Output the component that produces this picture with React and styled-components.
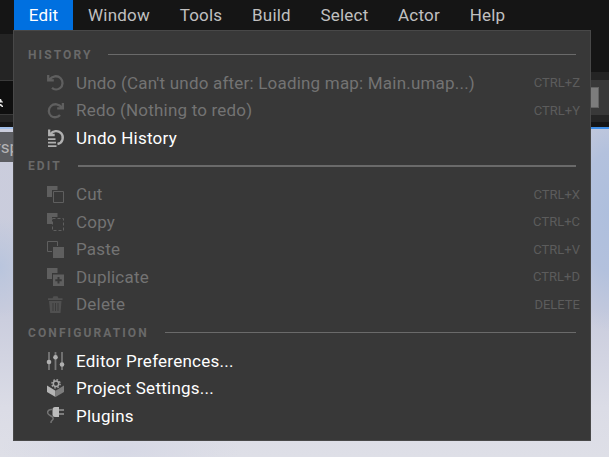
import React from 'react';
import styled, { createGlobalStyle } from 'styled-components';

const GlobalStyle = createGlobalStyle`
  body { margin: 0; overflow: hidden; background: #151515; }
  * { box-sizing: border-box; }
`;

const Editor = styled.div`
  position: relative;
  width: 609px;
  height: 457px;
  overflow: hidden;
  display: flex;
  flex-direction: column;
  background: #151515;
  font-family: Roboto, sans-serif;
  font-size: 17px;
  white-space: nowrap;
`;

const MenuBar = styled.nav`
  display: flex;
  flex: none;
  height: 30px;
  padding-left: 14px;
`;

const MenuBarItem = styled.div`
  flex: none;
  width: ${(p) => p.$width}px;
  text-align: center;
  line-height: 30px;
  letter-spacing: 0.2px;
  color: ${(p) => (p.$active ? '#fff' : '#c0c0c0')};
  background: ${(p) => (p.$active ? '#0070e0' : 'transparent')};
`;

const Chrome = styled.div`
  display: flex;
  justify-content: space-between;
  flex: none;
  height: 97px;
`;

const LeftChrome = styled.div`
  width: 14px;
  display: flex;
  flex-direction: column;
  padding-top: 4px;
`;

const RightChrome = styled(LeftChrome)`
  width: 20px;
  padding-top: 42px;
`;

const Strip = styled.div`
  flex: none;
  display: flex;
  align-items: center;
  height: ${(p) => p.$height}px;
  background: ${(p) => p.$color};
`;

const Knob = styled.div`
  width: 10px;
  height: 21px;
  border: 1px solid #626262;
  border-left: 0;
  background: #7c7c7c;
`;

const ToolGlyph = styled.svg`
  flex: none;
  width: 4px;
  height: 10px;
  margin-top: 10px;
`;

const Viewport = styled.main`
  flex: 1;
  background:
    linear-gradient(90deg, #a3c0ea 14px, #3f8fe8 14px) 0 0 / 100% 2px no-repeat,
    radial-gradient(ellipse 50px 120px at 609px 85px, #aebfdd 0%, #b3c1dd 50%, rgba(179, 193, 221, 0) 100%),
    radial-gradient(ellipse 34px 50px at 0 140px, #b9c5dd 0%, rgba(185, 197, 221, 0) 100%),
    radial-gradient(ellipse 120px 30px at 120px 322px, #d6d8e5 0%, rgba(214, 216, 229, 0) 100%),
    linear-gradient(#cbcddc 0, #c9ccdd 55%, #dbdce6 85%, #dedfe7 100%);
`;

const ViewportTab = styled.div`
  width: 40px;
  height: 30px;
  margin-top: 5px;
  line-height: 31px;
  background: #5c5d61;
  color: #b4b4b6;
  text-indent: -5px;
`;

const DropDown = styled.div`
  position: absolute;
  top: 30px;
  left: 13px;
  width: 578px;
  height: 411px;
  padding: 10px 10px 10px 14px;
  border: 1px solid #484848;
  background: #383838;
  display: grid;
  grid-template-rows: 28px 27px 28px 28px 28px 28px 27px 28px 27px 28px 29px 27px 28px 28px;
`;

const Heading = styled.div`
  display: flex;
  align-items: center;
  gap: 16px;
  padding-right: 4px;
  font-size: 12px;
  font-weight: 700;
  letter-spacing: 2.1px;
  color: #696969;

  &::after {
    content: '';
    flex: 1;
    height: ${(p) => (p.$thick ? 2 : 1)}px;
    margin-bottom: ${(p) => (p.$thick ? 0 : 1)}px;
    background: #6a6a6a;
  }
`;

const Item = styled.div`
  display: flex;
  align-items: center;
  padding-left: 18px;
  letter-spacing: ${(p) => (p.$disabled ? 0.2 : 0.25)}px;
  color: ${(p) => (p.$disabled ? '#737373' : '#fff')};
`;

const Icon = styled.svg`
  flex: none;
  width: 20px;
  height: 20px;
  margin-right: 10px;
  fill: none;
  color: ${(p) => (p.$disabled ? '#5f5f5f' : '#b0b0b0')};
`;

const Shortcut = styled.span`
  margin-left: auto;
  font-size: 13px;
  letter-spacing: 0;
  color: #5c5c5c;
`;

const icons = {
  undo: (
    <g stroke="currentColor" strokeWidth="2.3">
      <path d="M2.2 2V7.4H7.8M3.3 6.6C6.2 2.7 11.5 2.3 14.4 5C17.4 7.8 17.2 12.8 14 15.2C11.6 17 8.2 16.8 6 14.8" />
    </g>
  ),
  redo: (
    <path stroke="currentColor" strokeWidth="2.3" d="M16.9 3V8.4H11.2M16 7.6C13.3 3.8 8 3.2 5 6C1.9 8.9 2.2 13.7 5.3 16.1C8.1 18 12 17.4 14 15" />
  ),
  history: (
    <g stroke="currentColor" strokeWidth="2.3">
      <path d="M3.2 1.5V7H8.7M4.2 6.3C7 2.4 12 2 15 5.1C18.4 9 16.8 14.9 11.5 16" />
      <path d="M2 11.2H9.5M2 14.7H10M2 18.2H10.5" strokeWidth="1.8" />
    </g>
  ),
  cut: (
    <g>
      <path fill="currentColor" d="M1 2H11.5V6H6V13H1z" />
      <path stroke="currentColor" d="M7.5 7.5H17.5V18.5H7.5z" />
    </g>
  ),
  copy: (
    <g>
      <path fill="currentColor" d="M1 1H11.5V5H6V12H1z" />
      <path stroke="currentColor" strokeDasharray="3 2" d="M6.5 6.5H17.5V18.5H6.5z" />
    </g>
  ),
  paste: (
    <g>
      <path stroke="currentColor" d="M6 12.5H1.5V2.5H11.5V7" />
      <path fill="currentColor" d="M7 8H18V19H7z" />
    </g>
  ),
  duplicate: (
    <g fill="currentColor">
      <path d="M1 1H11.5V6H6V12H1z" />
      <path fillRule="evenodd" d="M7 7.5H18V19H7zM11.5 10V12.2H9.3V14.2H11.5V16.4H13.5V14.2H15.7V12.2H13.5V10z" />
    </g>
  ),
  trash: (
    <g fill="#505050">
      <path d="M2 4.2H6.5L7.5 2.2H11.5L12.5 4.2H16.5V6H2zM3 7H15.5L14.5 19H4.2z" />
      <path stroke="#3b3b3b" d="M7 9V17M9.5 9V17M12 9V17" />
    </g>
  ),
  sliders: (
    <g fill="currentColor">
      <path stroke="#777" strokeWidth="1.8" d="M3 1V19M9.5 1V19M16 1V19" />
      <circle cx="3" cy="11" r="2.3" />
      <circle cx="9.5" cy="6.3" r="2.3" />
      <circle cx="16" cy="13.5" r="2.3" />
    </g>
  ),
  project: (
    <g>
      <path fill="#b4b4b4" d="M1 7.5L9.5 12.7V19L1 14z" />
      <path fill="#7d7d7d" d="M18 7.5L9.5 12.7V19L18 14z" />
      <circle cx="10" cy="5.8" r="2.7" stroke="#a8a8a8" strokeWidth="1.5" />
      <circle cx="10" cy="5.8" r="4.1" stroke="#a8a8a8" strokeWidth="1.4" strokeDasharray="1.6 1.62" />
    </g>
  ),
  plug: (
    <g>
      <path fill="#bcbcbc" d="M6.5 3.5Q6.5 1 9 1H13V11H9Q6.5 11 6.5 8.5z" />
      <path stroke="#7d7d7d" strokeWidth="2" d="M13 4H18M13 8H18" />
      <path stroke="#747474" strokeWidth="1.5" d="M6.5 3.5C3 3 1.2 5 1.7 7.2C2.3 10 7.2 9.6 7.2 12.5C7.2 14.8 4.5 14 5 17" />
    </g>
  ),
};

const menus = [
  ['Edit', 59], ['Window', 92], ['Tools', 72], ['Build', 69], ['Select', 77], ['Actor', 72], ['Help', 65],
];

const sections = [
  {
    title: 'HISTORY',
    items: [
      ['undo', "Undo (Can't undo after: Loading map: Main.umap...)", 'CTRL+Z'],
      ['redo', 'Redo (Nothing to redo)', 'CTRL+Y'],
      ['history', 'Undo History'],
    ],
  },
  {
    title: 'EDIT',
    thick: true,
    items: [
      ['cut', 'Cut', 'CTRL+X'],
      ['copy', 'Copy', 'CTRL+C'],
      ['paste', 'Paste', 'CTRL+V'],
      ['duplicate', 'Duplicate', 'CTRL+D'],
      ['trash', 'Delete', 'DELETE'],
    ],
  },
  {
    title: 'CONFIGURATION',
    items: [
      ['sliders', 'Editor Preferences...'],
      ['project', 'Project Settings...'],
      ['plug', 'Plugins'],
    ],
  },
];

export default function App() {
  return (
    <Editor>
      <GlobalStyle />
      <MenuBar>
        {menus.map(([name, width], i) => (
          <MenuBarItem key={name} $width={width} $active={i === 0}>{name}</MenuBarItem>
        ))}
      </MenuBar>
      <Chrome>
        <LeftChrome>
          <Strip $height={46} $color="#242424" />
          <Strip $height={1} $color="#3a3a3a" />
          <Strip $height={33} $color="#0f0f0f">
            <ToolGlyph viewBox="0 0 4 10">
              <path fill="#e8e8e8" d="M0 1H1L2 3.5H3V4.5H0zM0 6H1L3 8V9H2L0 7.5z" />
            </ToolGlyph>
          </Strip>
          <Strip $height={1} $color="#3a3a3a" />
          <Strip $height={7} $color="#242424" />
        </LeftChrome>
        <RightChrome>
          <Strip $height={8} $color="#242424" />
          <Strip $height={35} $color="#383838"><Knob /></Strip>
          <Strip $height={7} $color="#242424" />
        </RightChrome>
      </Chrome>
      <Viewport>
        <ViewportTab>rsp</ViewportTab>
      </Viewport>
      <DropDown>
        {sections.map((section) => (
          <React.Fragment key={section.title}>
            <Heading $thick={section.thick}>{section.title}</Heading>
            {section.items.map(([icon, label, shortcut]) => (
              <Item key={label} $disabled={Boolean(shortcut)}>
                <Icon viewBox="0 0 20 20" $disabled={Boolean(shortcut)}>{icons[icon]}</Icon>
                {label}
                {shortcut && <Shortcut>{shortcut}</Shortcut>}
              </Item>
            ))}
          </React.Fragment>
        ))}
      </DropDown>
    </Editor>
  );
}
